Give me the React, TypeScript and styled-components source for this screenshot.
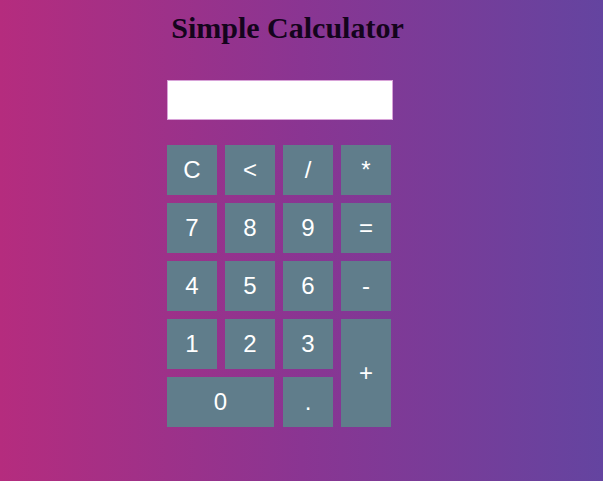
import styled, { createGlobalStyle } from "styled-components";

const GlobalStyle = createGlobalStyle`
  html, body {
    margin: 0;
    padding: 0;
    height: 100%;
  }
  body {
    background: linear-gradient(to right, #b52c7e, #8a3592 50%, #6444a0);
    font-family: "Liberation Sans", Arial, sans-serif;
  }
`;

type Key = { label: string; col?: string; row?: string };

const keys: Key[] = [
  { label: "C" },
  { label: "<" },
  { label: "/" },
  { label: "*" },
  { label: "7" },
  { label: "8" },
  { label: "9" },
  { label: "=" },
  { label: "4" },
  { label: "5" },
  { label: "6" },
  { label: "-" },
  { label: "1" },
  { label: "2" },
  { label: "3" },
  { label: "+", col: "4", row: "4 / span 2" },
  { label: "0", col: "1 / span 2" },
  { label: "." },
];

const App = () => {
  return (
    <>
      <GlobalStyle />
      <Page>
        <Calculator>
          <Title>Simple Calculator</Title>
          <Display type="text" readOnly />
          <Keypad>
            {keys.map((k) => (
              <KeyButton key={k.label} $col={k.col} $row={k.row} $wide={k.label === "0"}>
                {k.label}
              </KeyButton>
            ))}
          </Keypad>
        </Calculator>
      </Page>
    </>
  );
};

const Page = styled.div`
  min-height: 481px;
  padding-left: 167px;
`;

const Calculator = styled.div`
  width: 241px;
  display: flex;
  flex-direction: column;
  align-items: flex-start;
`;

const Title = styled.h1`
  align-self: stretch;
  margin: 11px 0 0 0;
  text-align: center;
  font-family: "Liberation Serif", "Times New Roman", serif;
  font-size: 30px;
  font-weight: bold;
  color: #14041c;
`;

const Display = styled.input`
  box-sizing: border-box;
  margin-top: 35px;
  width: 226px;
  height: 40px;
  border: 1px solid #d8a2d8;
  background: #ffffff;
  outline: none;
  padding: 0 8px;
  font-size: 22px;
`;

const Keypad = styled.div`
  margin-top: 25px;
  display: grid;
  grid-template-columns: repeat(4, 50px);
  grid-auto-rows: 50px;
  gap: 8px;
`;

const KeyButton = styled.button<{ $col?: string; $row?: string; $wide?: boolean }>`
  grid-column: ${(p) => p.$col ?? "auto"};
  grid-row: ${(p) => p.$row ?? "auto"};
  width: ${(p) => (p.$wide ? "107px" : "auto")};
  border: none;
  padding: 0;
  background: #607d8b;
  color: #ffffff;
  font-family: "Liberation Sans", Arial, sans-serif;
  font-size: 24px;
  cursor: pointer;
`;

export default App;
